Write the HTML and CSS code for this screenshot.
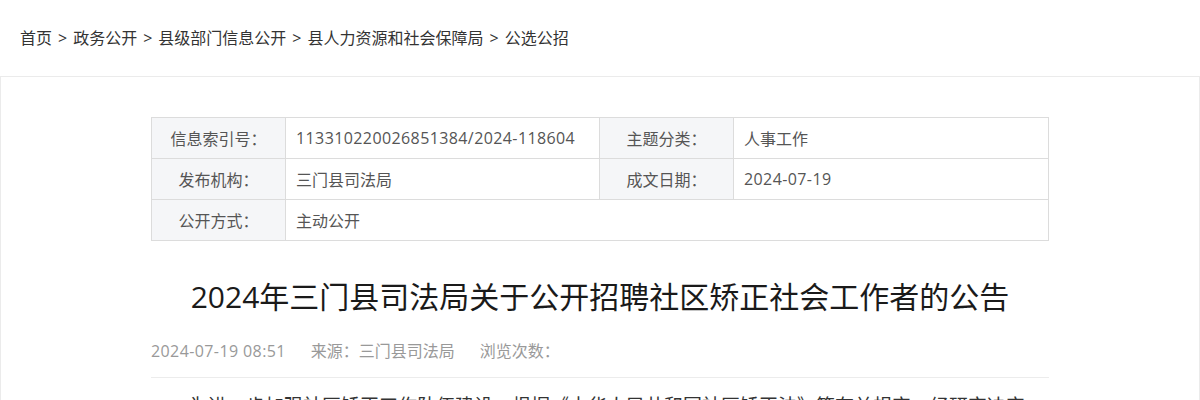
FILE: index.html
```html
<!DOCTYPE html>
<html lang="zh-CN">
<head>
<meta charset="utf-8">
<title>2024年三门县司法局关于公开招聘社区矫正社会工作者的公告</title>
<link rel="stylesheet" href="styles.css">
</head>
<body>
<nav class="crumbs">
  <a href="#">首页</a><span class="sep">&gt;</span><a href="#">政务公开</a><span class="sep">&gt;</span><a href="#">县级部门信息公开</a><span class="sep">&gt;</span><a href="#">县人力资源和社会保障局</a><span class="sep">&gt;</span><a href="#">公选公招</a>
</nav>
<main class="panel">
  <div class="content">
    <table class="info">
      <tr>
        <th>信息索引号：</th>
        <td class="w1"><span class="num">113310220026851384/2024-118604</span></td>
        <th>主题分类：</th>
        <td>人事工作</td>
      </tr>
      <tr>
        <th>发布机构：</th>
        <td class="w1">三门县司法局</td>
        <th>成文日期：</th>
        <td><span class="num">2024-07-19</span></td>
      </tr>
      <tr>
        <th>公开方式：</th>
        <td colspan="3">主动公开</td>
      </tr>
    </table>
    <h1 class="title">2024年三门县司法局关于公开招聘社区矫正社会工作者的公告</h1>
    <div class="meta">
      <span class="item num">2024-07-19 08:51</span>
      <span class="item">来源：三门县司法局</span>
      <span class="item">浏览次数：</span>
    </div>
    <div class="article">
      <p>为进一步加强社区矫正工作队伍建设，根据《中华人民共和国社区矫正法》等有关规定，经研究决定，面向社会公开招聘社区矫正社会工作者。</p>
    </div>
  </div>
</main>
</body>
</html>
```
FILE: styles.css
```css
html, body {
  margin: 0;
  padding: 0;
  background: #fff;
}
body {
  font-family: "Open Sans", "Noto Sans CJK SC", sans-serif;
  color: #333;
}
.crumbs {
  height: 76px;
  display: flex;
  align-items: center;
  padding-left: 20px;
  font-size: 16px;
  line-height: 24px;
}
.crumbs a {
  color: #333;
  text-decoration: none;
}
.crumbs .sep {
  padding: 0 6px;
  color: #333;
}
.panel {
  border: 1px solid #ebebeb;
  border-bottom: none;
  min-height: 400px;
}
.content {
  width: 898px;
  margin: 0 auto;
  padding-top: 40px;
}
.num {
  letter-spacing: 0.4px;
}
.info {
  width: 898px;
  border-collapse: collapse;
  table-layout: fixed;
  font-size: 16px;
  color: #555;
}
.info th, .info td {
  box-sizing: border-box;
  border: 1px solid #dcdcdc;
  height: 41px;
  padding: 0 10px;
  font-weight: normal;
}
.info th {
  width: 134px;
  background: #f5f6f8;
  text-align: center;
  padding: 0;
}
.info td {
  text-align: left;
}
.info td.w1 {
  width: 314px;
}
.title {
  margin: 32px 0 0;
  font-size: 30px;
  line-height: 48px;
  font-weight: normal;
  color: #1a1a1a;
  text-align: center;
}
.meta {
  display: flex;
  gap: 25px;
  margin-top: 18px;
  padding-bottom: 14px;
  border-bottom: 1px solid #ececec;
  font-size: 16px;
  line-height: 24px;
  color: #999;
}
.article {
  padding-top: 10px;
}
.article p {
  margin: 0;
  font-size: 19px;
  line-height: 36px;
  text-indent: 2em;
  color: #333;
}
```
